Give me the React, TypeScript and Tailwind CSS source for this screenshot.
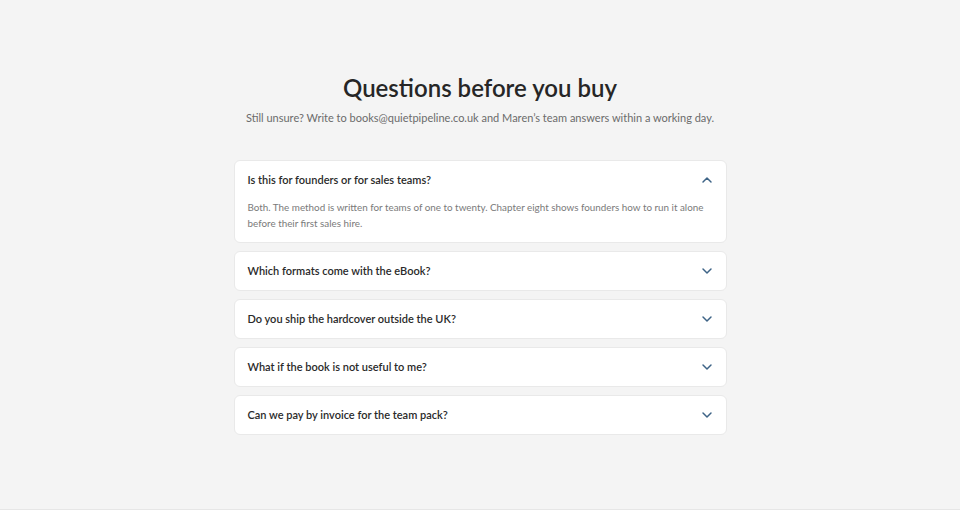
import { ChevronDown, ChevronUp } from 'lucide-react'

const faqs = [
  {
    q: 'Is this for founders or for sales teams?',
    a: 'Both. The method is written for teams of one to twenty. Chapter eight shows founders how to run it alone before their first sales hire.',
  },
  { q: 'Which formats come with the eBook?' },
  { q: 'Do you ship the hardcover outside the UK?' },
  { q: 'What if the book is not useful to me?' },
  { q: 'Can we pay by invoice for the team pack?' },
]

function FaqItem({ q, a }: { q: string; a?: string }) {
  const open = !!a
  return (
    <div className="bg-white rounded-md border border-[#e9e9e9]">
      <div className="flex items-center justify-between pl-[13px] pr-[11px] h-[38px]">
        <span className="text-[11px] font-semibold text-[#2a2a2a]">{q}</span>
        <span className="text-[#3d6386]">
          {open ? <ChevronUp size={16} strokeWidth={2.2} /> : <ChevronDown size={16} strokeWidth={2.2} />}
        </span>
      </div>
      {open && (
        <p className="pl-[13px] pr-5 pb-[11px] text-[9.85px] leading-[16px] text-[#7a7a7a]">{a}</p>
      )}
    </div>
  )
}

export default function App() {
  return (
    <div className="min-h-[510px] bg-[#f4f4f4] border-b border-[#e6e6e6] font-['Lato',sans-serif]">
      <div className="w-[493px] mx-auto pt-[72px] pb-[74px]">
        <h1 className="text-center text-[24px] leading-[32px] font-semibold text-[#262626] whitespace-nowrap -mx-20">
          Questions before you buy
        </h1>
        <p className="text-center text-[11px] leading-[18px] text-[#6b6b6b] mt-[5px] whitespace-nowrap -mx-20">
          Still unsure? Write to books@quietpipeline.co.uk and Maren’s team answers within a working day.
        </p>
        <div className="flex flex-col gap-2 mt-[33px]">
          {faqs.map((f) => (
            <FaqItem key={f.q} q={f.q} a={f.a} />
          ))}
        </div>
      </div>
    </div>
  )
}
